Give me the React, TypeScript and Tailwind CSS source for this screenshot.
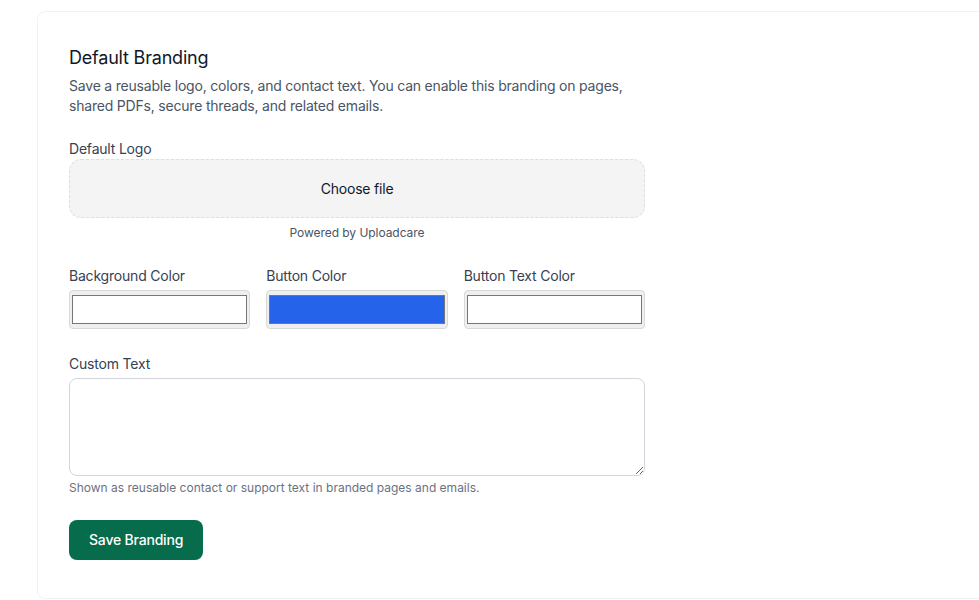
import React from "react";

function ColorSwatch({ label, color }: { label: string; color: string }) {
  return (
    <div className="flex flex-col">
      <label className="mb-[4px] text-sm leading-5 text-gray-700">{label}</label>
      <div className="h-[39px] rounded-[4px] border border-[#d9d9d9] bg-[#efefef] px-[2px] py-[4px]">
        <div className="h-full w-full border border-[#767676]" style={{ backgroundColor: color }} />
      </div>
    </div>
  );
}

export default function App() {
  return (
    <div
      className="h-[600px] w-[979px] overflow-hidden bg-white tracking-[-0.2px]"
      style={{ fontFamily: "Inter, 'Noto Sans', sans-serif" }}
    >
      <div className="ml-[37px] mt-[11px] w-[1000px] rounded-lg border border-[#f1f2f4] bg-white pl-[31px] pr-8 pt-8 pb-[38px]">
        <div className="w-[576px]">
          <h2 className="text-lg leading-7 font-normal tracking-[-0.2px] text-gray-900">Default Branding</h2>
          <p className="mt-1 text-sm leading-5 text-gray-600">
            Save a reusable logo, colors, and contact text. You can enable this branding on pages,
            shared PDFs, secure threads, and related emails.
          </p>

          <div className="mt-[23px]">
            <label className="block text-sm leading-5 text-gray-700">Default Logo</label>
            <div className="flex h-[59px] items-center justify-center rounded-xl border border-dashed border-[#dedede] bg-[#f4f4f4] text-sm text-gray-900">
              Choose file
            </div>
            <div className="mt-[7px] text-center text-xs leading-4 tracking-[-0.05px] text-gray-600">Powered by Uploadcare</div>
          </div>

          <div className="mt-[25px] grid grid-cols-3 gap-4">
            <ColorSwatch label="Background Color" color="#ffffff" />
            <ColorSwatch label="Button Color" color="#2563eb" />
            <ColorSwatch label="Button Text Color" color="#ffffff" />
          </div>

          <div className="mt-[25px]">
            <label className="block text-sm leading-5 text-gray-700">Custom Text</label>
            <textarea
              className="mt-[4px] block h-[98px] w-full resize-y rounded-lg border border-gray-300 px-3 py-2 text-sm outline-none"
              defaultValue=""
            />
            <p className="mt-[4px] text-xs leading-4 tracking-normal text-gray-500">
              Shown as reusable contact or support text in branded pages and emails.
            </p>
          </div>

          <button className="mt-6 h-[40px] rounded-lg bg-[#066c4c] px-5 text-sm font-medium text-white">
            Save Branding
          </button>
        </div>
      </div>
    </div>
  );
}
